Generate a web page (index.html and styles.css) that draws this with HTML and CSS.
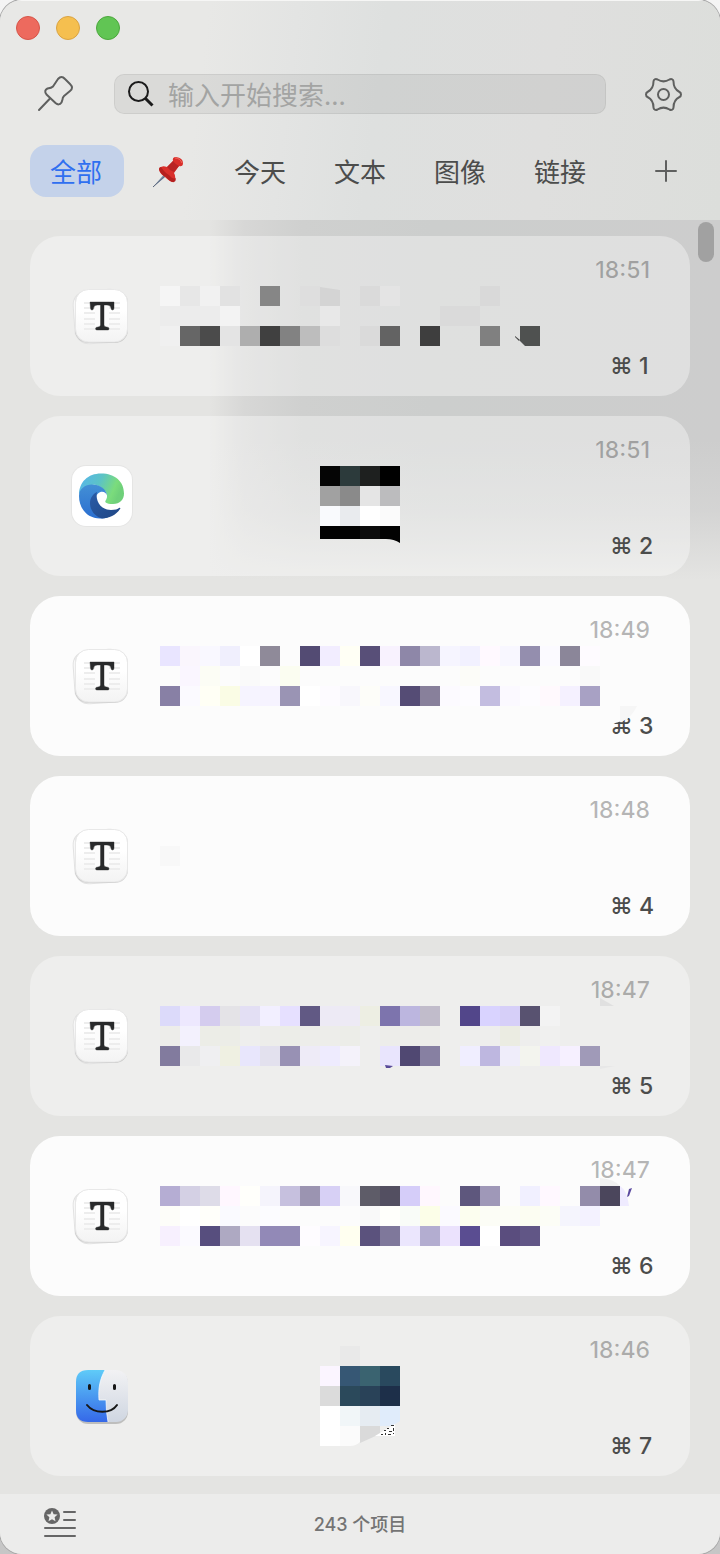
FILE: index.html
```html
<!DOCTYPE html>
<html lang="zh-CN">
<head>
<meta charset="utf-8">
<meta name="viewport" content="width=device-width, initial-scale=1">
<title>剪贴板</title>
<link rel="stylesheet" href="styles.css">
</head>
<body>
<svg class="defs" aria-hidden="true">
  <defs>
    <linearGradient id="paper" x1="0" y1="0" x2="0" y2="1"><stop offset=".4" stop-color="#fff"/><stop offset="1" stop-color="#f3f3f3"/></linearGradient>
    <linearGradient id="edge-top" x1="0" y1="0" x2="1" y2=".3"><stop offset="0" stop-color="#56b4ee"/><stop offset=".5" stop-color="#5cc3c6"/><stop offset=".85" stop-color="#7bdc7c"/><stop offset="1" stop-color="#6fd07a"/></linearGradient>
    <linearGradient id="edge-mid" x1="0" y1="0" x2="0" y2="1"><stop offset="0" stop-color="#438fd5"/><stop offset="1" stop-color="#2b6fd0"/></linearGradient>
    <linearGradient id="edge-low" x1="0" y1="0" x2="1" y2="1"><stop offset="0" stop-color="#2a5ca8"/><stop offset="1" stop-color="#204684"/></linearGradient>
    <linearGradient id="finder-blue" x1="0" y1="0" x2="0" y2="1"><stop offset="0" stop-color="#5fcbf8"/><stop offset="1" stop-color="#3568e8"/></linearGradient>
    <linearGradient id="finder-gray" x1="0" y1="0" x2="0" y2="1"><stop offset="0" stop-color="#f2f2f4"/><stop offset="1" stop-color="#cfd6e1"/></linearGradient>
    <symbol id="typora" viewBox="0 0 60 60">
      <rect x="2" y="4" width="51" height="53" rx="14" fill="#f7f7f7" stroke="#e2e2e2" transform="rotate(-4 28 31)"/>
      <rect x="3" y="4" width="53" height="53" rx="13" fill="#000" opacity=".14"/>
      <rect x="3.500" y="3.500" width="52" height="52.500" rx="13" fill="url(#paper)" stroke="#e8e8e8"/>
      <path d="M12 17h36M12 22h36M12 27h36M12 33h36M12 38h36M12 43h36" stroke="#ededed" stroke-width="2"/>
      <path d="M23 15h14v28h-14z" fill="#fcfcfc"/>
      <path d="M18 16h24v6q0 2-1.500 2t-1.500-2q-.5-3-4-3h-3v20q0 2 2.500 2t2.500 1.500-1 1.500h-11q-1.500 0-1.500-1.500t2.500-1.500 2.500-2v-20h-3q-3.500 0-4 3 0 2-1.500 2t-1.500-2z" fill="#292a2b" stroke="#292a2b" stroke-width=".4"/>
    </symbol>
    <symbol id="edge" viewBox="0 0 62 62">
      <rect x="0" y="0" width="62" height="62" rx="15" fill="#e5e5e4"/>
      <rect x="1" y="1" width="60" height="60" rx="14" fill="#fff"/>
      <path d="M8 30C8 17 17 8.500 30 8.500c14 0 23 8 23 20 0 6-4 10.500-11 10.500-7 0-9-2-7-4 4-6-3-13-10-15-8-1-15 4-17 10z" fill="url(#edge-top)"/>
      <path d="M8 31C8 24 14 19.500 21 19.500c8 0 14 4 15 11-1-4-6-5-9-2-4 4-4 10 0 15 2 4 8 6 13 6-2 3-6 4-10 4C17 54 8 44 8 31z" fill="url(#edge-mid)"/>
      <path d="M26 27c-2 9 4 18 14 18 4 0 7-1 8-2 1-.5 2 .5 1 1-4 6-11 9.500-18 9.500-7-2-12-8-12-15.500 0-5 3-9 7-11z" fill="url(#edge-low)"/>
    </symbol>
    <symbol id="finder" viewBox="0 0 60 60">
      <rect x="4" y="5" width="52" height="53" rx="12" fill="#000" opacity=".2"/>
      <rect x="4" y="4" width="52" height="52" rx="12" fill="url(#finder-gray)"/>
      <path d="M33 4H16Q4 4 4 16v28q0 12 12 12h20q-2-10-2-22h-7c-1-12 1-21 6-30z" fill="url(#finder-blue)"/>
      <path d="M33 4c-5 9-7 18-6 30h7q0 12 2 22" fill="none" stroke="#fff" stroke-opacity=".7"/>
      <path d="M17.500 19.500v3M42.500 19.500v3" stroke="#171717" stroke-width="3" stroke-linecap="round"/>
      <path d="M15 39c7 9 24 9 30 0" fill="none" stroke="#171717" stroke-width="2" stroke-linecap="round"/>
    </symbol>
  </defs>
</svg>

<div class="window">
  <header class="header">
    <div class="titlebar">
      <button class="light light-close" aria-label="关闭"></button>
      <button class="light light-min" aria-label="最小化"></button>
      <button class="light light-zoom" aria-label="缩放"></button>
    </div>
    <div class="toolbar">
      <button class="tool" aria-label="固定窗口">
        <svg width="40" height="40" viewBox="0 0 40 40" fill="none" stroke="#5f605f" stroke-width="2" stroke-linecap="round" stroke-linejoin="round"><path d="M3 36l11-11.500"/><path d="M22 5q3.500-4 7 0l5 5q4 4 0 7l-6 5q-1.500 1.500-1.500 3.500l-1 3q-2.500 3.500-6 .5l-9-8.500q-3-4 1-6 4-.5 5.500-2z"/></svg>
      </button>
      <label class="search">
        <svg width="28" height="28" viewBox="0 0 28 28" fill="none" stroke="#1b1b1b"><circle cx="11.500" cy="11.500" r="9.500" stroke-width="2"/><path d="M18 18l7.500 7.500" stroke-width="3"/></svg>
        <input class="search-input" type="text" placeholder="输入开始搜索..." aria-label="搜索">
      </label>
      <button class="tool" aria-label="设置">
        <svg width="40" height="40" viewBox="0 0 40 40" fill="none" stroke="#5f605f" stroke-width="2" stroke-linejoin="round"><circle cx="19.500" cy="20.500" r="5.500"/><path d="M13.500 5.500c4 2.500 8 2.500 12 0 2-1 4 0 4 2 0 5 2 8.500 6 10.500 2 1 2 4 0 5-4 2-6 5.500-6 10.500 0 2-2 3-4 2-4-2.500-8-2.500-12 0-2 1-4 0-4-2 0-5-2-8.500-6-10.500-2-1-2-4 0-5 4-2 6-5.500 6-10.500 0-2 2-3 4-2z"/></svg>
      </button>
    </div>
    <nav class="tabs" aria-label="分类">
      <button class="tab tab-active">全部</button>
      <button class="tab" aria-label="已固定">
        <svg width="36" height="34" viewBox="0 0 36 34"><path d="M3 33L16 18l3 2z" fill="#8094ac"/><path d="M3 33L17 20" stroke="#58647a" stroke-width="1"/><path d="M9 15q2-4 8-2l6-6q-1-4 3-4 7 1 7 6 0 4-4 3l-5 7q3 5-1 9-3 0-8-5-6-4-6-8z" fill="#d92f2b"/><path d="M9 15q1 5 7 8 5 6 8 5 2-1 2-4-3 2-7-3-4-2-8-8-2 0-2 2z" fill="#b5201f"/><path d="M17 13l6-6q2 3 6 5l-5 6q-4-1-7-5z" fill="#b92424"/><path d="M25 4q5 0 7 5" stroke="#f0685d" stroke-width="1" fill="none"/></svg>
      </button>
      <button class="tab">今天</button>
      <button class="tab">文本</button>
      <button class="tab">图像</button>
      <button class="tab">链接</button>
      <button class="add" aria-label="添加分类">
        <svg width="22" height="22" viewBox="0 0 22 22" stroke="#5f605f" stroke-width="2" stroke-linecap="round"><path d="M11 1v20M1 11h20"/></svg>
      </button>
    </nav>
  </header>

  <main class="list">
    <div class="scroll-thumb"></div>
    <article class="card">
      <svg class="app"><use href="#typora"/></svg>
      <svg class="clip clip-text" data-clip="one" viewBox="0 0 400 60"></svg>
      <div class="meta"><time class="time">18:51</time><kbd class="key">⌘ 1</kbd></div>
    </article>
    <article class="card">
      <svg class="app app-edge"><use href="#edge"/></svg>
      <svg class="clip clip-image" data-clip="two" viewBox="0 0 80 100"></svg>
      <div class="meta"><time class="time">18:51</time><kbd class="key">⌘ 2</kbd></div>
    </article>
    <article class="card card-white">
      <svg class="app"><use href="#typora"/></svg>
      <svg class="clip clip-text" data-clip="three" viewBox="0 0 400 60"></svg>
      <div class="meta"><time class="time">18:49</time><kbd class="key">⌘ 3</kbd></div>
    </article>
    <article class="card card-white">
      <svg class="app"><use href="#typora"/></svg>
      <svg class="clip clip-text" data-clip="four" viewBox="0 0 400 60"></svg>
      <div class="meta"><time class="time">18:48</time><kbd class="key">⌘ 4</kbd></div>
    </article>
    <article class="card">
      <svg class="app"><use href="#typora"/></svg>
      <svg class="clip clip-text" data-clip="five" viewBox="0 0 400 60"></svg>
      <div class="meta"><time class="time">18:47</time><kbd class="key">⌘ 5</kbd></div>
    </article>
    <article class="card card-white">
      <svg class="app"><use href="#typora"/></svg>
      <svg class="clip clip-text" data-clip="six" viewBox="0 0 400 60"></svg>
      <div class="meta"><time class="time">18:47</time><kbd class="key">⌘ 6</kbd></div>
    </article>
    <article class="card">
      <svg class="app"><use href="#finder"/></svg>
      <svg class="clip clip-image" data-clip="seven" viewBox="0 0 80 100"></svg>
      <div class="meta"><time class="time">18:46</time><kbd class="key">⌘ 7</kbd></div>
    </article>
  </main>

  <footer class="footer">
    <button class="collections" aria-label="收藏列表">
      <svg width="32" height="32" viewBox="0 0 32 32"><circle cx="8" cy="8" r="8" fill="#666"/><path d="M8 2.500l1.600 3.700 4 .3-3 2.700.9 4L8 11.200l-3.500 2 .9-4-3-2.700 4-.3z" fill="#ececeb"/><path d="M20 4h11M20 12h11M1 20h30M1 28h30" stroke="#666" stroke-width="2" stroke-linecap="round"/></svg>
    </button>
    <p class="count">243 个项目</p>
  </footer>
</div>
<script src="clips.js"></script>
</body>
</html>
```
FILE: styles.css
```css
* {
  box-sizing: border-box;
}

body {
  margin: 0;
  background: linear-gradient(#f4f4f4, #c6c6c6);
  font-family: Inter, "Noto Sans CJK SC", sans-serif;
  color: #4c4d4c;
}

button {
  padding: 0;
  border: 0;
  background: none;
  color: inherit;
  font: inherit;
}

svg {
  display: block;
}

.defs {
  position: absolute;
  width: 0;
  height: 0;
}

.window {
  min-height: 100vh;
  display: flex;
  flex-direction: column;
  overflow: hidden;
  border-radius: 22px;
  background: #e4e4e2;
  box-shadow: 0 0 0 1px #a8a8a8;
}

.header {
  padding-bottom: 23px;
  border-top: 1px solid #f6f6f5;
  background: linear-gradient(97deg, #e8e8e6 28%, #e3e4e3 40%, #dee0df 52%, #dfdfde 75%, #dcdedb);
}

.titlebar {
  display: flex;
  gap: 16px;
  padding: 15px 16px 34px;
}

.light {
  width: 24px;
  height: 24px;
  border: 1px solid #d65549;
  border-radius: 50%;
  background: #ed6a5e;
}

.light-min {
  border-color: #d9a343;
  background: #f5bf4f;
}

.light-zoom {
  border-color: #4ca73d;
  background: #61c554;
}

.toolbar {
  display: flex;
  align-items: center;
  gap: 38px;
  padding: 0 36px;
}

.tool {
  width: 40px;
  height: 40px;
}

.search {
  flex: 1;
  min-width: 0;
  height: 40px;
  display: flex;
  align-items: center;
  gap: 13px;
  padding: 0 12px;
  border: 1px solid rgba(0, 0, 0, 0.06);
  border-radius: 10px;
  background: rgba(0, 0, 0, 0.06);
}

.search-input {
  flex: 1;
  min-width: 0;
  height: 36px;
  margin-bottom: 2px;
  padding: 0;
  border: 0;
  outline: 0;
  background: none;
  color: #333;
  font: 26px "Noto Sans CJK SC", sans-serif;
}

.search-input::placeholder {
  color: #a3a4a3;
}

.tabs {
  display: flex;
  align-items: center;
  gap: 6px;
  padding: 31px 43px 0 30px;
}

.tab {
  height: 52px;
  padding: 0 22px 0 20px;
  border-radius: 16px;
  font: 26px/52px "Noto Sans CJK SC", sans-serif;
  white-space: nowrap;
}

.tab-active {
  background: #c4d2ea;
  color: #2f6ff0;
}

.add {
  margin-left: auto;
}

.list {
  position: relative;
  flex: 1;
  display: flex;
  flex-direction: column;
  gap: 20px;
  padding: 16px 30px 18px;
  background:
    linear-gradient(rgba(228, 228, 226, 0) 220px, rgba(228, 228, 226, 0.3) 290px, #e4e4e2 360px),
    linear-gradient(90deg, #e4e4e2 29%, #d7d7d6 34%, #cfd0cf 42%, #cccecd 60%, #cdcdcd);
}

.scroll-thumb {
  position: absolute;
  top: 2px;
  right: 6px;
  width: 16px;
  height: 40px;
  border-radius: 8px;
  background: #a1a1a1;
}

.card {
  display: grid;
  grid-template-columns: 60px minmax(0, 1fr) 90px;
  column-gap: 28px;
  align-items: center;
  height: 160px;
  padding: 0 40px 0 42px;
  border-radius: 30px;
  background: rgba(255, 255, 255, 0.37);
}

.card-white {
  background: #fcfcfc;
}

.app {
  width: 60px;
  height: 60px;
}

.app-edge {
  width: 62px;
  height: 62px;
  justify-self: center;
}

.clip {
  z-index: 1;
  overflow: visible;
}

.clip-text {
  width: 400px;
  height: 60px;
}

.clip-image {
  width: 80px;
  height: 100px;
  margin-left: 160px;
}

.meta {
  align-self: stretch;
  display: flex;
  flex-direction: column;
  align-items: flex-end;
  justify-content: space-between;
  padding: 20px 0 16px;
}

.time {
  color: rgba(0, 0, 0, 0.28);
  font-size: 23px;
  font-weight: 500;
  line-height: 28px;
}

.key {
  width: 40px;
  font-family: Inter, sans-serif;
  font-size: 23px;
  font-weight: 500;
  line-height: 28px;
  white-space: nowrap;
}

.footer {
  display: grid;
  grid-template-columns: 1fr auto 1fr;
  align-items: center;
  height: 60px;
  padding: 0 44px;
  background: #ececeb;
}

.count {
  margin: 0;
  padding-top: 2px;
  color: #747474;
  font-size: 18px;
  font-weight: 500;
  line-height: 28px;
}
```
FILE: clips.js
```js
// Blurred clip previews: rows of 20px cells, "-" leaves a cell empty.
const clips = {
  one: {
    rows: [
      "f5f5f5 e7e7e7 f1f1f1 e2e2e2 - 868686 - dedede - - dadada e4e4e4 - - - - d9d9d9",
      "ececec ececec ececec f3f3f3 - - - - e8e8e8 - - - - - dadada dadada",
      "f0f0f0 666666 4b4b4b e4e4e4 aeaeae 404040 828282 bdbdbd dddddd - dadada 636363 - 3e3e3e - - 808080"
    ],
    shapes: [
      ["d4d4d4", "M160 1l20 3v16h-20z"],
      ["4f5150", "M360 40h20v20h-15l-5-5z"],
      ["444444", "M355 50l5 4-1 1-4-4z"]
    ]
  },
  two: {
    rows: [
      "-",
      "050505 2c3a3b 1e201f 000000",
      "a1a1a1 8a8a8a e5e5e5 bcbcbe",
      "f9fafd e9ebee ffffff fbfbfb"
    ],
    shapes: [
      ["020202", "M0 80h80v17q-6-4-14-4H0z"],
      ["0d0d0d", "M40 80h20v13h-20z"]
    ]
  },
  three: {
    rows: [
      "e9e5ff faf6fd f9f8ff f0effd ffffff 8f8a99 - 534b73 f2edff fffff5 584f78 f8f2fe 8e87a8 bbb7ce f6f5ff f2f1ff fff9ff f8f7ff 948eae fbfaff 8b8699 fefbff",
      "- faf6ff fcfdf5 - fafafa - fbfdf1 - - - - - - - - fcfcf8 - - - - - f9f9f9",
      "8880a5 fbfaff fffff5 fafce5 f6f4ff f6f3ff 9a94b4 ffffff fdfbff f8f7fc fdfdf9 f8f7ff 554c75 88809b fcfaff fdfcff c3bde0 fbf9ff fdfcff fff9fd f5f1ff a8a1c4"
    ],
    shapes: [
      ["fcfcfc", "M440 60h37q-5 13-15 15l-10 3h-12z"],
      ["f6f6f6", "M460 60h17q-5 11-14 15l-3 1z"]
    ]
  },
  four: { rows: ["-", "f8f8f8"], shapes: [] },
  five: {
    rows: [
      "dcdafa ede8fe d4ccee e4e3e7 e3dff4 f2efff e6e0ff 615984 edeaf5 edeaf5 edeee3 7d74ad bcb6df c1bccb - 52468a d9d3ff d6cff8 585270 f3f3f3",
      "ededea f3f1fd ecede7 ecede7 - ededea ecede8 ededea ededea ecede8 - ededea ededea ededea - - - ebece2 - f0f0ef",
      "827b9e e9e9ea efeff1 eff0e2 e8e6fc e3e1ee 9891b4 eeebf7 eeebfe f4f2fa - e9e5fd 504872 8780a2 - f0eeff beb7e0 efedfa f3f4ee efe8fe f6f0ff a09ab8"
    ],
    shapes: [
      ["e0e0e0", "M440-8l14 8h-14z"],
      ["e7e7e7", "M440 60h15l-15 3z"],
      ["594b99", "M225 59l8 1-3 2h-4z"]
    ]
  },
  six: {
    rows: [
      "b5add3 d4d0e4 dedce8 fff7ff fffffb f5f4fc c6c0de 9b94b1 d7d0f5 f8f8fb 5e5c68 534f61 d5cdf9 fff7fe - 5e577d 9f98b8 - f1f0ff fff8ff - 938caa 4b465c",
      "fdfdf9 ffffff fffffa fafaff - fcfcff - - - - f9f9f9 fffffb f9fcf8 fcfee8 fbfaff fcfeef fcfdf6 fcfdf6 fcfdf2 fcfdf6 f5f5fd f4f2ff",
      "f7f0fe fbfaff 574e7e aea9c2 e5e1f1 9289b7 938bb5 fefcff f7f5ff fffff0 5b527d 7f789b ebe6fd b3add0 ebe2fd 5a4d91 ffffff 5a4d7e 615686"
    ],
    shapes: [
      ["f1f1f1", "M440-8q14 1 20 8h-20z"],
      ["efebff", "M460 0q7 4 9 20h-9z"],
      ["5b4aa0", "M469 3l3-1-3 8-2 1z"]
    ]
  },
  seven: {
    rows: [
      "- e9e9e9",
      "fbf5ff 365774 3a6370 29495e",
      "dbdbdb 2b495b 294258 1d2f49",
      "ffffff f1f6f8 e6ecf2"
    ],
    shapes: [
      ["e0ecfb", "M60 60h20v15l-8 5h-12z"],
      ["ffffff", "M0 80h20v20h-20z"],
      ["fbfbfb", "M20 80h20v16q-4 4-10 4h-10z"],
      ["dadada", "M40 80h20v8l-20 9z"],
      ["ffffff", "M60 87l15-9v12h-20z"],
      ["333333", "M67 82h2v1h-2zM71 79h3v1h-3zM64 84h2v1h-2zM73 82h1v3h-1zM69 85h3v1h-3zM61 88h2v1h-2zM65 87h1v2h-1zM68 88h3v1h-3zM73 87h1v1h-1z"]
    ]
  }
};

const NS = "http://www.w3.org/2000/svg";

function addPath(svg, color, d) {
  const path = document.createElementNS(NS, "path");
  path.setAttribute("fill", "#" + color);
  path.setAttribute("d", d);
  svg.append(path);
}

document.querySelectorAll("[data-clip]").forEach((svg) => {
  const clip = clips[svg.dataset.clip];
  clip.rows.forEach((row, y) => {
    row.split(" ").forEach((color, x) => {
      if (color !== "-") {
        addPath(svg, color, `M${x * 20} ${y * 20}h20v20h-20z`);
      }
    });
  });
  clip.shapes.forEach(([color, d]) => addPath(svg, color, d));
});
```
